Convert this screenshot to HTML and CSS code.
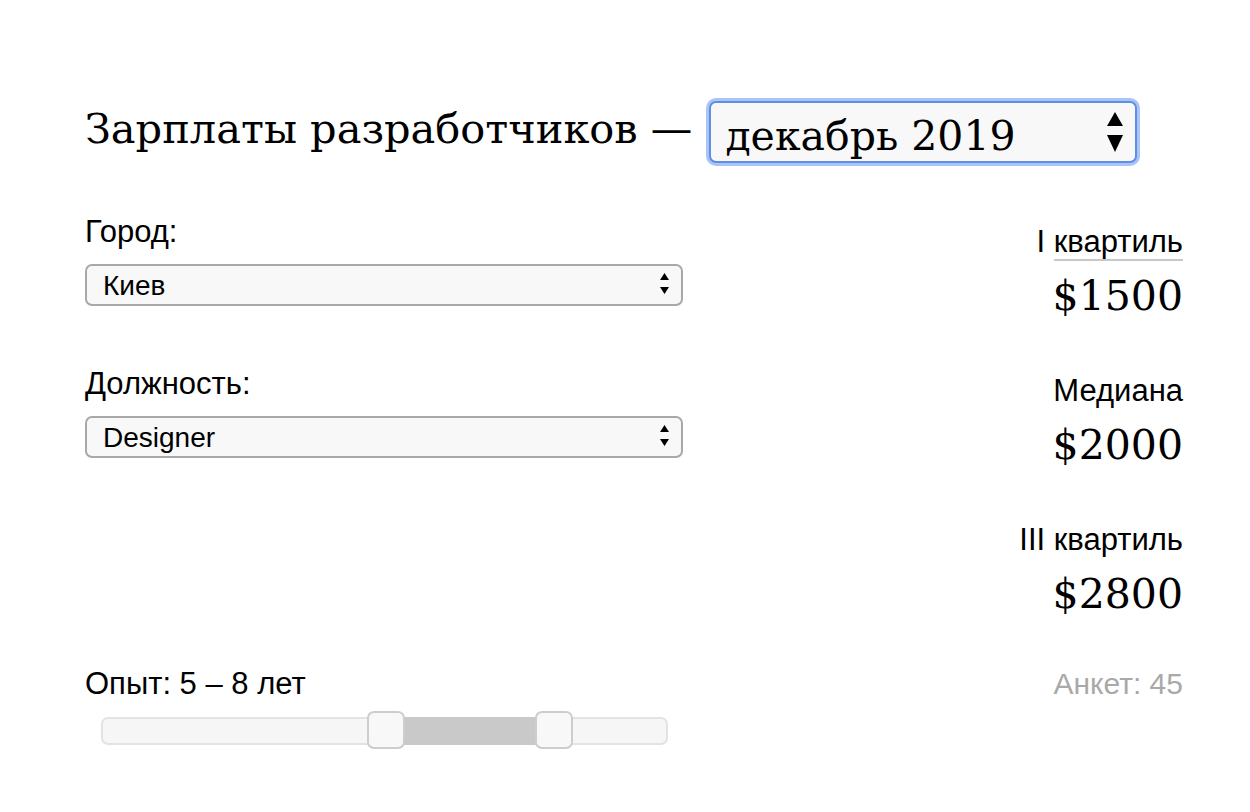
FILE: index.html
```html
<!DOCTYPE html>
<html lang="ru">
<head>
    <meta charset="UTF-8">
    <meta name="viewport" content="width=device-width, initial-scale=1.0">
    <title>Зарплаты разработчиков</title>
    <link rel="stylesheet" href="styles.css">
</head>
<body>
    <div class="container">

        <h1 class="title">
            <span class="title-text">Зарплаты разработчиков —</span>
            <span class="select-wrap big">
                <select id="period" class="period">
                    <option>декабрь 2019</option>
                    <option>июнь 2019</option>
                </select>
                <svg class="arrows" width="16" height="41" viewBox="0 0 16 41">
                    <path d="M8 0 L16 14 L0 14 Z M0 23 L16 23 L8 40 Z" fill="#000"/>
                </svg>
            </span>
        </h1>

        <div class="main">
            <div class="filters">
                <div class="form-group">
                    <label for="city">Город:</label>
                    <span class="select-wrap">
                        <select id="city">
                            <option>Киев</option>
                            <option>Харьков</option>
                            <option>Львов</option>
                        </select>
                        <svg class="arrows" width="9" height="21" viewBox="0 0 9 21">
                            <path d="M4.5 0 L9 7 L0 7 Z M0 14 L9 14 L4.5 21 Z" fill="#000"/>
                        </svg>
                    </span>
                </div>

                <div class="form-group">
                    <label for="position">Должность:</label>
                    <span class="select-wrap">
                        <select id="position">
                            <option>Designer</option>
                            <option>Developer</option>
                        </select>
                        <svg class="arrows" width="9" height="21" viewBox="0 0 9 21">
                            <path d="M4.5 0 L9 7 L0 7 Z M0 14 L9 14 L4.5 21 Z" fill="#000"/>
                        </svg>
                    </span>
                </div>

                <div class="experience">
                    <div class="exp-label">Опыт: 5 – 8 лет</div>
                    <div class="slider">
                        <div class="track"></div>
                        <div class="range" style="left: 303px; width: 132px;"></div>
                        <span class="handle" style="left: 266px;"></span>
                        <span class="handle" style="left: 434px;"></span>
                    </div>
                </div>
            </div>

            <div class="stats">
                <div class="stat">
                    <div class="stat-name">I <span class="term">квартиль</span></div>
                    <div class="stat-value">$1500</div>
                </div>
                <div class="stat">
                    <div class="stat-name">Медиана</div>
                    <div class="stat-value">$2000</div>
                </div>
                <div class="stat">
                    <div class="stat-name">III квартиль</div>
                    <div class="stat-value">$2800</div>
                </div>
                <div class="count">Анкет: 45</div>
            </div>
        </div>

    </div>
</body>
</html>
```

FILE: styles.css
```css
* {
    margin: 0;
    padding: 0;
    box-sizing: border-box;
}

body {
    font-family: "Liberation Sans", Arial, sans-serif;
    color: #000;
    background: #fff;
}

.container {
    width: 1098px;
    margin-left: 85px;
    padding-top: 98px;
}

.title {
    font-family: "DejaVu Serif", Georgia, serif;
    font-weight: normal;
    font-size: 41.5px;
    display: flex;
    align-items: flex-start;
    gap: 14px;
    height: 68px;
}

.title-text {
    margin-top: 6px;
    flex-shrink: 0;
}

.select-wrap {
    position: relative;
    display: block;
}

.select-wrap > select {
    appearance: none;
    -webkit-appearance: none;
    width: 598px;
    height: 42px;
    font-family: "Liberation Sans", Arial, sans-serif;
    font-size: 28px;
    color: #000;
    background: #f8f8f8;
    border: 2px solid #a8a8a8;
    border-radius: 7px;
    padding-left: 16px;
    outline: none;
}

.select-wrap .arrows {
    position: absolute;
    right: 14px;
    top: 9px;
    pointer-events: none;
}

.select-wrap.big {
    flex-shrink: 0;
    width: 434px;
    height: 68px;
    border-radius: 10px;
    padding: 3px;
    background: #a9c4f5;
}

.select-wrap.big > select {
    width: 428px;
    height: 62px;
    font-family: "DejaVu Serif", Georgia, serif;
    font-size: 41px;
    border: 2px solid #5e8fe6;
    border-radius: 7px;
    padding-left: 14px;
    padding-top: 8px;
}

.select-wrap.big .arrows {
    right: 17px;
    top: 14px;
}

.main {
    display: flex;
    justify-content: space-between;
    margin-top: 48px;
}

.filters {
    width: 598px;
}

.form-group + .form-group {
    margin-top: 60px;
}

.form-group > label {
    display: block;
    font-size: 31px;
    height: 50px;
}

.experience {
    margin-top: 208px;
}

.exp-label {
    font-size: 31px;
    height: 45px;
}

.slider {
    position: relative;
    height: 38px;
    margin-left: 16px;
    width: 567px;
}

.track {
    position: absolute;
    top: 6px;
    left: 0;
    right: 0;
    height: 28px;
    background: #f6f6f6;
    border: 2px solid #e3e3e3;
    border-radius: 7px;
}

.range {
    position: absolute;
    top: 6px;
    height: 28px;
    background: #c9c9c9;
}

.handle {
    position: absolute;
    top: 0;
    width: 38px;
    height: 38px;
    background: #f8f8f8;
    border: 2px solid #cdcdcd;
    border-radius: 7px;
}

.stats {
    text-align: right;
    padding-top: 10px;
}

.stat {
    height: 149px;
}

.stat-name {
    font-size: 31px;
    height: 48px;
}

.term {
    border-bottom: 2px solid #c8c8c8;
}

.stat-value {
    font-family: "DejaVu Serif", Georgia, serif;
    font-size: 41px;
}

.count {
    font-size: 30px;
    color: #a9a9a9;
    margin-top: -4px;
}
```
